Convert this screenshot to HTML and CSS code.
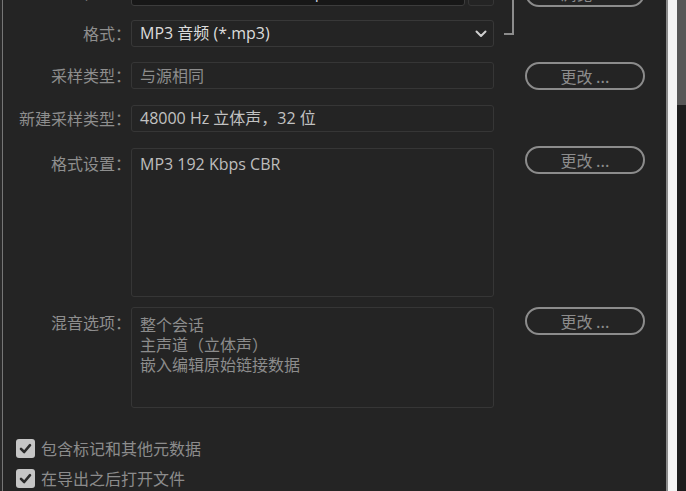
FILE: index.html
```html
<!DOCTYPE html>
<html lang="zh-CN">
<head>
<meta charset="utf-8">
<title>导出音频</title>
<link rel="stylesheet" href="styles.css">
</head>
<body>
<div class="window">
  <div class="edge"></div>
  <main class="panel">
    <div class="form">
      <div class="row r0">
        <div class="lbl">位置：</div>
        <div class="box path"><span>C:\Users\Admin\Desktop</span></div>
        <div class="path-btn"></div>
        <button class="btn">浏览 ...</button>
      </div>
      <div class="row r1">
        <div class="lbl">格式：</div>
        <div class="box select">
          <span>MP3 音频 (*.mp3)</span>
          <svg class="chev" width="12" height="8" viewBox="0 0 12 8"><path d="M1.5 1.5 L6 6 L10.5 1.5" fill="none" stroke="#cfcfcf" stroke-width="2" stroke-linecap="round" stroke-linejoin="round"/></svg>
        </div>
        <div class="bracket"></div>
      </div>
      <div class="row r2">
        <div class="lbl">采样类型：</div>
        <div class="box dim">与源相同</div>
        <button class="btn">更改 ...</button>
      </div>
      <div class="row r3">
        <div class="lbl">新建采样类型：</div>
        <div class="box">48000 Hz 立体声，32 位</div>
      </div>
      <div class="row r4">
        <div class="lbl multi">格式设置：</div>
        <div class="box area fmt">MP3 192 Kbps CBR</div>
        <button class="btn">更改 ...</button>
      </div>
      <div class="row r5">
        <div class="lbl multi">混音选项：</div>
        <div class="box area mix">整个会话<br>主声道（立体声）<br>嵌入编辑原始链接数据</div>
        <button class="btn">更改 ...</button>
      </div>
      <div class="checks">
        <label class="check">
          <span class="cb"><svg width="19" height="19" viewBox="0 0 19 19"><path d="M5 9.8 L8.2 13 L14 6.2" fill="none" stroke="#2b2b2b" stroke-width="2.6" stroke-linecap="round" stroke-linejoin="round"/></svg></span>
          <span class="ctext">包含标记和其他元数据</span>
        </label>
        <label class="check">
          <span class="cb"><svg width="19" height="19" viewBox="0 0 19 19"><path d="M5 9.8 L8.2 13 L14 6.2" fill="none" stroke="#2b2b2b" stroke-width="2.6" stroke-linecap="round" stroke-linejoin="round"/></svg></span>
          <span class="ctext">在导出之后打开文件</span>
        </label>
      </div>
    </div>
  </main>
  <div class="sep"></div>
  <div class="white"></div>
  <div class="rstrip"><div class="rtop"></div></div>
</div>
</body>
</html>
```

FILE: styles.css
```css
html, body {
  margin: 0;
  padding: 0;
}
body {
  background: #242424;
  font-family: "Open Sans", "Noto Sans CJK SC", sans-serif;
  font-size: 16px;
  overflow: hidden;
}
.window {
  display: flex;
  width: 686px;
  height: 491px;
  overflow: hidden;
}
.edge {
  width: 2px;
  flex: none;
  background: #2a2a2a;
}
.panel {
  width: 663px;
  flex: none;
  background: #242424;
  border-left: 1px solid #767676;
  overflow: hidden;
}
.sep {
  width: 2px;
  flex: none;
  background: #8a8a8a;
}
.white {
  width: 9px;
  flex: none;
  background: #f4f4f4;
}
.rstrip {
  width: 9px;
  flex: none;
  background: #1d1d1d;
}
.rtop {
  height: 105px;
  background: #575757;
}
.form {
  margin-top: -21px;
}
.row {
  display: flex;
  align-items: flex-start;
  position: relative;
}
.r1 { margin-top: 14px; }
.r2 { margin-top: 15px; }
.r3 { margin-top: 16px; }
.r4 { margin-top: 16px; }
.r5 { margin-top: 10px; }
.lbl {
  width: 128px;
  flex: none;
  box-sizing: border-box;
  text-align: right;
  color: #8e8e8e;
  font-family: "Noto Sans CJK SC", sans-serif;
  line-height: 27px;
  white-space: nowrap;
}
.lbl.multi {
  line-height: 20px;
  padding-top: 5px;
}
.box {
  width: 363px;
  height: 27px;
  flex: none;
  box-sizing: border-box;
  border: 1px solid #363636;
  border-radius: 3px;
  padding: 0 8px;
  line-height: 25px;
  color: #c2c2c2;
  white-space: nowrap;
  overflow: hidden;
}
.path {
  width: 334px;
  background: #171717;
  border-color: #3c3c3c;
  color: #c9d2e0;
}
.path-btn {
  width: 26px;
  height: 27px;
  margin-left: 3px;
  flex: none;
  box-sizing: border-box;
  border: 1px solid #363636;
  border-radius: 3px;
}
.select {
  display: flex;
  align-items: center;
  justify-content: space-between;
  color: #dcdcdc;
  border-color: #383838;
  padding-right: 6px;
}
.chev {
  display: block;
}
.dim {
  color: #8c8c8c;
  font-family: "Noto Sans CJK SC", sans-serif;
}
.area {
  line-height: 20px;
  padding-top: 5px;
}
.fmt {
  height: 149px;
  color: #bdbdbd;
}
.mix {
  height: 101px;
  color: #8c8c8c;
  font-family: "Noto Sans CJK SC", sans-serif;
  line-height: 20px;
  padding-top: 6px;
}
.btn {
  margin-left: 31px;
  width: 120px;
  height: 28px;
  margin-bottom: -1px;
  flex: none;
  box-sizing: border-box;
  border: 2px solid #8c8c8c;
  border-radius: 14px;
  background: transparent;
  color: #8c8c8c;
  font-family: "Noto Sans CJK SC", sans-serif;
  font-size: 16px;
  line-height: 24px;
  padding: 0;
  text-align: center;
}
.r4 .btn {
  margin-top: -2px;
}
.bracket {
  position: absolute;
  left: 501px;
  top: -30px;
  width: 10px;
  height: 45px;
  box-sizing: border-box;
  border-right: 2px solid #8c8c8c;
  border-bottom: 2px solid #8c8c8c;
}
.checks {
  margin-top: 31px;
  padding-left: 13px;
  display: flex;
  flex-direction: column;
  gap: 11px;
}
.check {
  display: flex;
  align-items: center;
  gap: 6px;
  height: 19px;
}
.cb {
  width: 19px;
  height: 19px;
  flex: none;
  background: #c6c6c6;
  border-radius: 3px;
}
.cb svg {
  display: block;
}
.ctext {
  color: #8c8c8c;
  font-family: "Noto Sans CJK SC", sans-serif;
  line-height: 19px;
  white-space: nowrap;
}
```
